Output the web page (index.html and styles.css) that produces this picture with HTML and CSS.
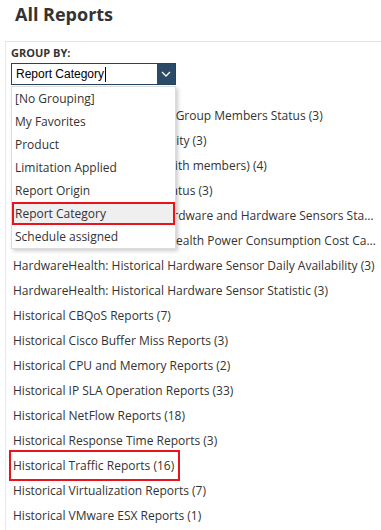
FILE: index.html
```html
<!DOCTYPE html>
<html>
<head>
  <title>All Reports</title>
  <meta charset="UTF-8" />
  <meta name="viewport" content="width=device-width, initial-scale=1.0"/>
  <link rel="stylesheet" href="styles.css">
</head>
<body>
  <h1 class="page-title">All Reports</h1>

  <div class="panel">
    <div class="group-by">
      <div class="group-label">GROUP BY:</div>
      <div class="select">
        <div class="select-value">Report Category<span class="caret"></span></div>
        <div class="select-btn">
          <svg width="10" height="6" viewBox="0 0 10 6"><polyline points="1,1 5,5 9,1" fill="none" stroke="#fff" stroke-width="1.3"/></svg>
        </div>
        <ul class="options">
          <li>[No Grouping]</li>
          <li>My Favorites</li>
          <li>Product</li>
          <li>Limitation Applied</li>
          <li>Report Origin</li>
          <li class="selected">Report Category</li>
          <li>Schedule assigned</li>
        </ul>
      </div>
    </div>

    <ul class="groups">
      <li>Groups: Current Groups and Group Members Status (3)</li>
      <li>Groups: Daily Group Availability (3)</li>
      <li>Groups: Group Availability (with members) (4)</li>
      <li>Groups: Historical Groups Status (3)</li>
      <li>HardwareHealth: Current Hardware and Hardware Sensors Status (Hardware) (2)</li>
      <li>HardwareHealth: Historical Health Power Consumption Cost Calculations (2)</li>
      <li>HardwareHealth: Historical Hardware Sensor Daily Availability (3)</li>
      <li>HardwareHealth: Historical Hardware Sensor Statistic (3)</li>
      <li>Historical CBQoS Reports (7)</li>
      <li>Historical Cisco Buffer Miss Reports (3)</li>
      <li>Historical CPU and Memory Reports (2)</li>
      <li>Historical IP SLA Operation Reports (33)</li>
      <li>Historical NetFlow Reports (18)</li>
      <li>Historical Response Time Reports (3)</li>
      <li class="marked">Historical Traffic Reports (16)</li>
      <li>Historical Virtualization Reports (7)</li>
      <li>Historical VMware ESX Reports (1)</li>
    </ul>
  </div>
</body>
</html>
```

FILE: styles.css
```css
body {
  margin: 0;
  background: #fff;
  color: #333;
  font-family: "Open Sans", sans-serif;
  overflow: hidden;
}
.page-title {
  margin: 2px 0 15px 15px;
  font-size: 18px;
  line-height: 24px;
  font-weight: bold;
  color: #333;
}
.panel {
  margin-left: 5px;
  border-top: 1px solid #e4e4e4;
  border-left: 1px solid #e8e8e8;
  height: 600px;
}
.group-by {
  padding: 4px 0 0 5px;
}
.group-label {
  font-size: 11px;
  line-height: 14px;
  font-weight: bold;
  color: #333;
}
.select {
  position: relative;
  margin-top: 3px;
  width: 165px;
  height: 22px;
  display: flex;
  box-sizing: border-box;
  border: 1px solid #23435f;
}
.select-value {
  flex: 1;
  font-family: "Liberation Sans", Arial, sans-serif;
  font-size: 12px;
  line-height: 20px;
  padding-left: 4px;
  color: #000;
}
.caret {
  display: inline-block;
  width: 1px;
  height: 15px;
  background: #000;
  vertical-align: -4px;
  margin-left: 1px;
}
.select-btn {
  width: 18px;
  background: #2a4a67;
  display: flex;
  align-items: center;
  justify-content: center;
}
.options {
  position: absolute;
  left: -1px;
  top: 22px;
  width: 165px;
  box-sizing: border-box;
  margin: 0;
  padding: 0;
  list-style: none;
  background: #fff;
  border: 1px solid #dcdcdc;
  box-shadow: 2px 2px 4px rgba(0,0,0,0.2);
  z-index: 2;
}
.options li {
  font-size: 12px;
  line-height: 23px;
  padding-left: 3px;
  color: #333;
}
.options li.selected {
  background: #efefef;
  outline: 2px solid #e8141b;
  outline-offset: -2px;
}
.groups {
  list-style: none;
  margin: 18px 0 0 0;
  padding: 0 0 0 5px;
}
.groups li {
  width: fit-content;
  max-width: 100%;
  box-sizing: border-box;
  padding: 0 4px 0 2px;
  font-size: 12px;
  line-height: 25px;
  color: #333;
  white-space: nowrap;
  overflow: hidden;
  text-overflow: ellipsis;
}
.groups li.marked {
  padding-top: 1px;
  padding-bottom: 1px;
  margin: -1px 0;
  outline: 2px solid #e8141b;
  overflow: visible;
}
```
